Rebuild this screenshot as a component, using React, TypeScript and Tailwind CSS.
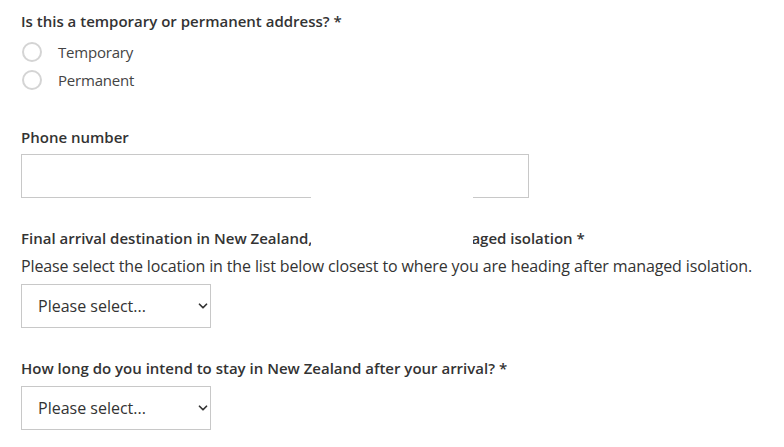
import { ChevronDown } from "lucide-react";

const font = "font-['Open_Sans',sans-serif]";

function Radio({ label }: { label: string }) {
  return (
    <label className="flex items-center h-[28px] gap-[16px] text-[15px] text-[#444] cursor-pointer">
      <input
        type="radio"
        name="addressType"
        className="appearance-none w-[20px] h-[20px] rounded-full border-2 border-[#d4d4d4] bg-white m-0 ml-[1px]"
      />
      <span className="tracking-[-0.2px]">{label}</span>
    </label>
  );
}

function Select() {
  return (
    <div className="relative w-[190px] h-[44px]">
      <select className="appearance-none w-full h-full border border-[#c8c8c8] bg-white pl-[16px] pr-8 text-[16px] text-[#333] outline-none">
        <option>Please select...</option>
      </select>
      <ChevronDown
        size={14}
        strokeWidth={3}
        className="absolute right-[1px] top-1/2 -translate-y-1/2 text-[#333] pointer-events-none"
      />
    </div>
  );
}

export default function App() {
  return (
    <div className={`relative w-[784px] h-[447px] bg-white overflow-hidden ${font}`}>
      <form className="flex flex-col pl-[21px] pt-[10px]">
        {/* Address type */}
        <p className="text-[15px] leading-[22px] font-semibold text-[#333]">
          Is this a temporary or permanent address? *
        </p>
        <div className="mt-[6px] flex flex-col">
          <Radio label="Temporary" />
          <Radio label="Permanent" />
        </div>

        {/* Phone */}
        <p className="mt-[32px] text-[15px] leading-[22px] font-semibold text-[#333]">Phone number</p>
        <input
          type="text"
          className="mt-[6px] w-[508px] h-[44px] border border-[#c8c8c8] bg-white px-3 outline-none"
        />

        {/* Destination */}
        <p className="mt-[29px] text-[15px] leading-[22px] font-semibold text-[#333] whitespace-nowrap">
          Final arrival destination in New Zealand,
          <span className="inline-block w-[159px]" />
          aged isolation *
        </p>
        <p className="mt-[6px] text-[16px] leading-[22px] text-[#333] whitespace-nowrap tracking-[-0.13px]">
          Please select the location in the list below closest to where you are heading after managed isolation.
        </p>
        <div className="mt-[7px]">
          <Select />
        </div>

        {/* Length of stay */}
        <p className="mt-[29px] text-[15px] leading-[22px] font-semibold text-[#333]">
          How long do you intend to stay in New Zealand after your arrival? *
        </p>
        <div className="mt-[7px]">
          <Select />
        </div>
      </form>

      {/* redacted area */}
      <div className="absolute left-[311px] top-[197px] w-[162px] h-[51px] bg-white" />
    </div>
  );
}
